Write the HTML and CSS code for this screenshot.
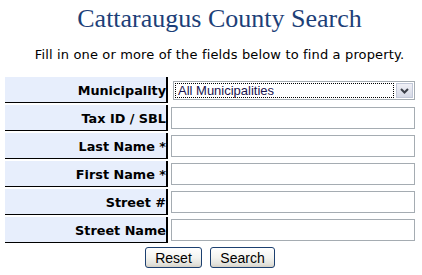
FILE: index.html
```html
<!DOCTYPE html>
<html>
<head>
<meta charset="utf-8">
<link rel="stylesheet" href="styles.css">
</head>
<body>
<div class="page">
  <h1 class="title">Cattaraugus County Search</h1>
  <p class="intro">Fill in one or more of the fields below to find a property.</p>
  <form class="form">
    <div class="grid">
      <label class="lbl first">Municipality</label>
      <div class="fld first">
        <div class="select">
          <span class="select-val">All Municipalities</span>
          <span class="select-btn">
            <svg width="9" height="6" viewBox="0 0 9 6"><path d="M1 1 L4.5 4.5 L8 1" fill="none" stroke="#3b3f48" stroke-width="2"/></svg>
          </span>
        </div>
      </div>
      <label class="lbl">Tax ID / SBL</label>
      <div class="fld"><input class="txt" type="text"></div>
      <label class="lbl">Last Name *</label>
      <div class="fld"><input class="txt" type="text"></div>
      <label class="lbl">First Name *</label>
      <div class="fld"><input class="txt" type="text"></div>
      <label class="lbl">Street #</label>
      <div class="fld"><input class="txt" type="text"></div>
      <label class="lbl">Street Name</label>
      <div class="fld"><input class="txt" type="text"></div>
    </div>
    <div class="buttons">
      <button type="button" class="btn">Reset</button>
      <button type="button" class="btn">Search</button>
    </div>
  </form>
</div>
</body>
</html>
```
FILE: styles.css
```css
html, body {
  margin: 0;
  padding: 0;
  background: #fff;
}
.page {
  width: 422px;
}
.title {
  margin: 0;
  padding: 4px 0 0 17px;
  text-align: center;
  font-family: "Liberation Serif", serif;
  font-weight: normal;
  font-size: 26px;
  line-height: 30px;
  color: #1d3f78;
}
.intro {
  margin: 14px 0 0 0;
  padding-left: 17px;
  text-align: center;
  font-family: "DejaVu Sans", Verdana, sans-serif;
  font-size: 13px;
  letter-spacing: 0.15px;
  line-height: 14px;
  color: #000;
}
.form {
  margin: 0;
  padding: 15px 0 0 5px;
}
.grid {
  display: grid;
  grid-template-columns: 163px 246px;
  grid-template-rows: 26px repeat(5, 26px);
  column-gap: 2px;
  row-gap: 2px;
}
.lbl {
  box-sizing: border-box;
  background: #e7eefc;
  border-right: 2px solid #000;
  border-bottom: 1px solid #000;
  font-family: "DejaVu Sans", Verdana, sans-serif;
  font-weight: bold;
  font-size: 12.8px;
  color: #000;
  display: flex;
  align-items: center;
  justify-content: flex-end;
  padding-right: 0;
  padding-top: 1px;
  white-space: nowrap;
}
.fld {
  display: flex;
  align-items: center;
  padding-left: 1px;
}
.txt {
  box-sizing: border-box;
  width: 244px;
  height: 22px;
  margin: 0;
  border: 1px solid #a5acb2;
  background: #fff;
  padding: 0 2px;
  font-family: "Liberation Sans", Arial, sans-serif;
  font-size: 13px;
  outline: none;
}
.select {
  box-sizing: border-box;
  width: 242px;
  height: 19px;
  margin-left: 2px;
  margin-top: 1px;
  border: 1px solid #a5acb2;
  background: #fff;
  display: flex;
  align-items: stretch;
  padding: 1px;
}
.select-val {
  flex: 1;
  border: 1px dotted #000;
  font-family: "Liberation Sans", Arial, sans-serif;
  font-size: 13px;
  line-height: 13px;
  color: #1a1450;
  padding-left: 2px;
  display: flex;
  align-items: center;
}
.select-btn {
  width: 15px;
  margin-left: 2px;
  background: linear-gradient(#f0f0f6, #d5d9e6);
  border: 1px solid #c2c8d8;
  display: flex;
  align-items: center;
  justify-content: center;
}
.buttons {
  display: flex;
  justify-content: center;
  gap: 8px;
  padding: 4px 0 0 0;
  width: 410px;
}
.btn {
  box-sizing: border-box;
  height: 21px;
  padding: 0 8px;
  margin: 0;
  border: 1px solid #1c4070;
  border-radius: 3px;
  background: linear-gradient(#ffffff 0%, #f4f4f0 50%, #e2e2dc 85%, #d6d0c4 100%);
  font-family: "Liberation Sans", Arial, sans-serif;
  font-size: 14px;
  color: #000;
  line-height: 18px;
}
.btn:first-child { width: 57px; }
.btn:last-child { width: 65px; }
```
